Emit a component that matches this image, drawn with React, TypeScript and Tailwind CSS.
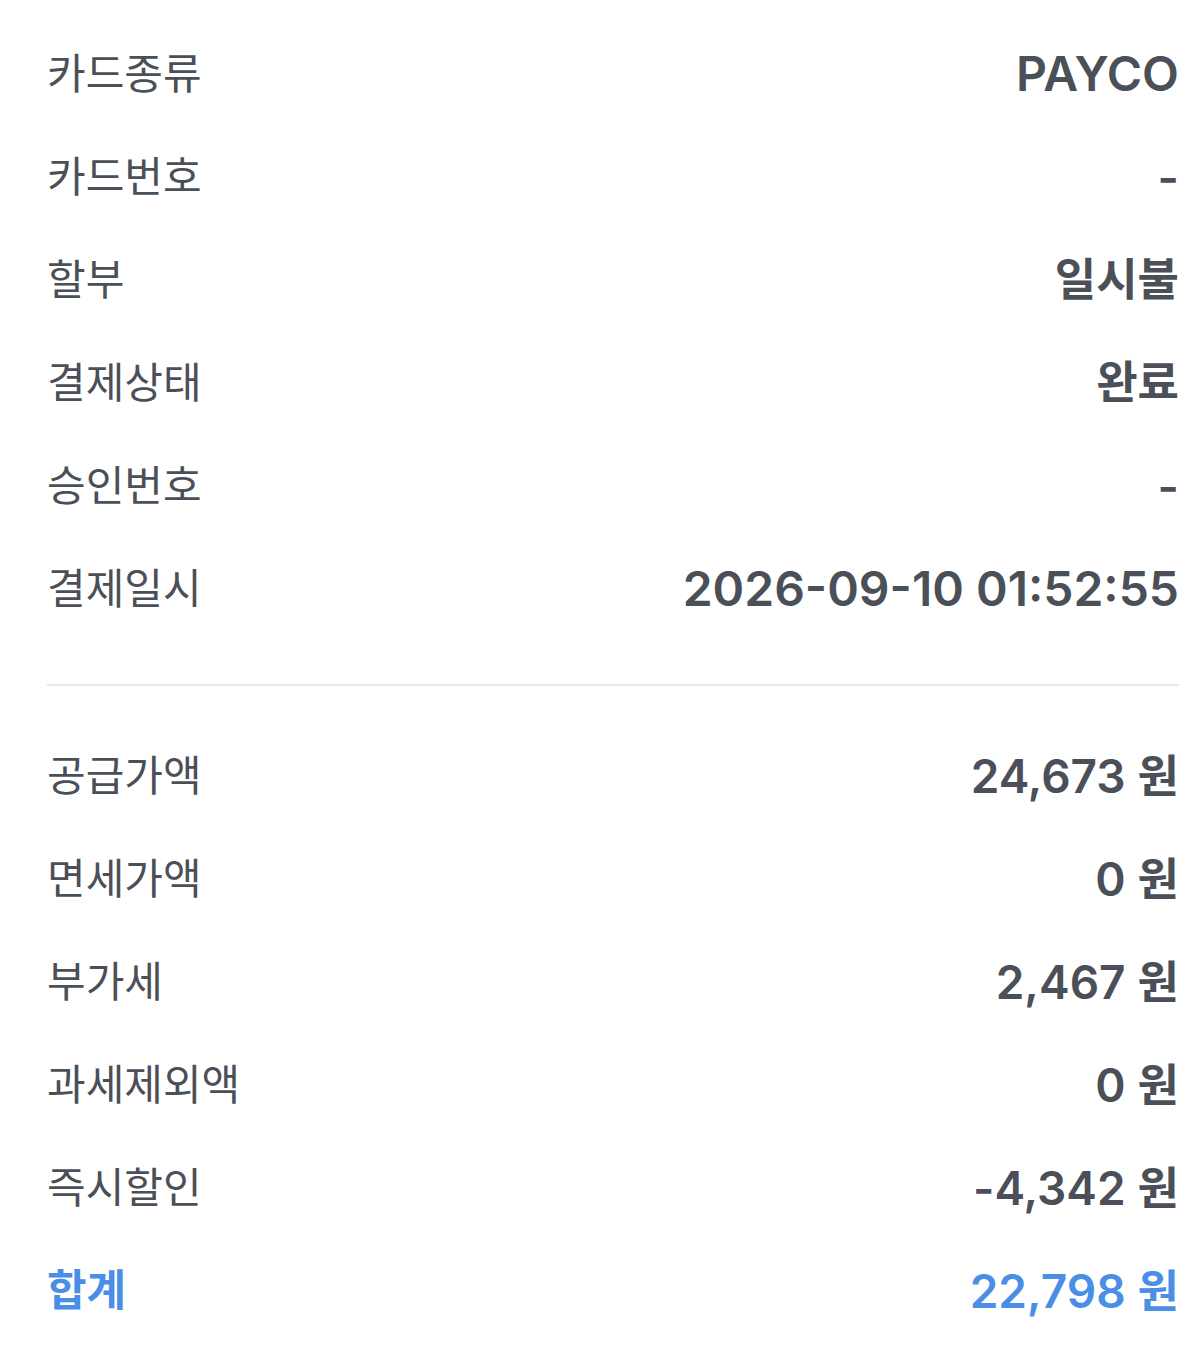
const cardRows = [
  { label: "카드종류", value: "PAYCO", size: "text-[48px]" },
  { label: "카드번호", value: "-", size: "text-[46px]" },
  { label: "할부", value: "일시불", size: "text-[45px]" },
  { label: "결제상태", value: "완료", size: "text-[45px]" },
  { label: "승인번호", value: "-", size: "text-[46px]" },
  { label: "결제일시", value: "2026-09-10 01:52:55", size: "text-[48px]" },
];

const amountRows = [
  { label: "공급가액", value: "24,673" },
  { label: "면세가액", value: "0" },
  { label: "부가세", value: "2,467" },
  { label: "과세제외액", value: "0" },
  { label: "즉시할인", value: "-4,342" },
];

function Row({ label, value, won, total, size = "text-[46px]" }: { label: string; value: string; won?: boolean; total?: boolean; size?: string }) {
  const color = total ? "text-[#4a8ee6]" : "text-[#4b4f58]";
  return (
    <div className="flex h-[103px] items-center justify-between">
      <span className={total ? `text-[43px] font-semibold ${color}` : `text-[42px] ${color}`}>{label}</span>
      <span className={`${size} font-semibold ${color}`}>
        {value}
        {won && <span className="ml-[12px] text-[45px]">원</span>}
      </span>
    </div>
  );
}

export default function App() {
  return (
    <div
      className="min-h-[1353px] bg-white pl-[47px] pr-[21px] pt-[22px] leading-none"
      style={{ fontFamily: 'Inter, "Noto Sans CJK KR", sans-serif' }}
    >
      {cardRows.map((r) => (
        <Row key={r.label} label={r.label} value={r.value} size={r.size} />
      ))}
      <div className="mb-[38px] mt-[44px] h-[2px] bg-[#e5e7eb]" />
      {amountRows.map((r) => (
        <Row key={r.label} label={r.label} value={r.value} won />
      ))}
      <Row label="합계" value="22,798" won total />
    </div>
  );
}
